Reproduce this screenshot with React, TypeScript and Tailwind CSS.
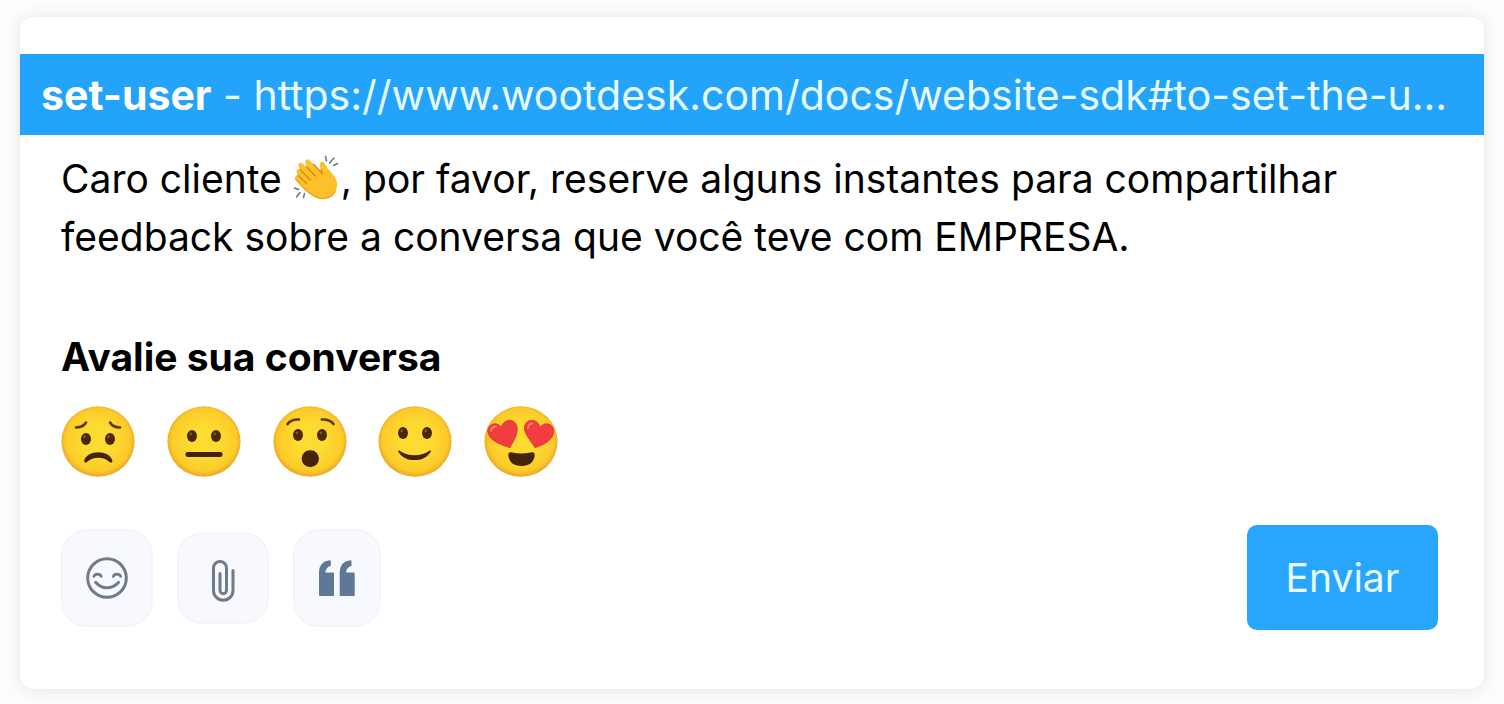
import React, { useState } from "react";

interface Rating {
  value: number;
  label: string;
  face: React.ReactNode;
}

const Eyes: React.FC<{ y: number }> = ({ y }) => (
  <>
    <ellipse cx="25" cy={y} rx="5" ry="6" fill="#4a2807" />
    <ellipse cx="49" cy={y} rx="5" ry="6" fill="#4a2807" />
    <circle cx="23.8" cy={y - 2} r="1.4" fill="#80561b" />
    <circle cx="47.8" cy={y - 2} r="1.4" fill="#80561b" />
  </>
);

const ratings: Rating[] = [
  {
    value: 1,
    label: "Muito ruim",
    face: (
      <>
        <g stroke="#5c370c" strokeWidth="2.6" strokeLinecap="round" fill="none">
          <path d="M15 21.5Q22 21.5 25 16.5" />
          <path d="M49 16.5Q52 21.5 59 21.5" />
        </g>
        <Eyes y={33} />
        <path
          d="M23.3 54.5C26 43.5 48.5 43.5 51.3 54.5C51.6 56.6 50 57.2 48.6 56C43 50.2 31.6 50.2 26 56C24.6 57.2 23 56.6 23.3 54.5Z"
          fill="#43240a"
        />
      </>
    ),
  },
  {
    value: 2,
    label: "Ruim",
    face: (
      <>
        <Eyes y={30} />
        <rect x="18.5" y="46" width="37" height="5" rx="2.2" fill="#43240a" />
      </>
    ),
  },
  {
    value: 3,
    label: "Regular",
    face: (
      <>
        <g stroke="#5c370c" strokeWidth="2.6" strokeLinecap="round" fill="none">
          <path d="M14.5 18Q18.5 13 26 13.5" />
          <path d="M48.8 13.5Q56.5 13 60.5 18" />
        </g>
        <Eyes y={29} />
        <rect x="28.7" y="44.3" width="17.2" height="16.6" rx="8" fill="#43240a" />
      </>
    ),
  },
  {
    value: 4,
    label: "Bom",
    face: (
      <>
        <Eyes y={27} />
        <path
          d="M20.2 45.4C19.9 44.6 21 44.2 22 45C31 50.8 42 50.8 51 45C52 44.2 53.1 44.6 52.8 45.4C47 57 26 57 20.2 45.4Z"
          fill="#43240a"
        />
      </>
    ),
  },
  {
    value: 5,
    label: "Excelente",
    face: (
      <>
        <g fill="#f23c3f" stroke="#d9352f" strokeWidth="0.8">
          <path d="M26 41.7C18 39 3.8 34.5 3.8 25C3.8 17.5 13.5 15 17.5 21.5C19 13 30 11.8 32.7 19.5C35 27 29.5 35 26 41.7Z" />
          <path d="M51 41.7C47.5 35 38.5 27 40.8 19.5C43.5 11.8 54.5 13 56 21.5C60 15 69.7 17.5 69.7 25C69.7 34.5 59 39 51 41.7Z" />
        </g>
        <path d="M7 25Q7.5 20.5 12 20.5" stroke="#fb7f74" strokeWidth="1.8" strokeLinecap="round" fill="none" />
        <path d="M44 22Q44.5 17.5 48.5 17.5" stroke="#fb7f74" strokeWidth="1.8" strokeLinecap="round" fill="none" />
        <path
          d="M24.3 49.5C24 46.5 26 45.8 28.5 46.5Q37.5 48.5 46.5 46.5C49 45.8 51 46.5 50.7 49.5C49.8 56.5 45 60 37.5 60C30 60 25.2 56.5 24.3 49.5Z"
          fill="#43240a"
        />
      </>
    ),
  },
];

const ClapIcon: React.FC = () => (
  <svg
    viewBox="0 0 48 46"
    role="img"
    aria-label="palmas"
    className="inline-block h-[46px] w-[48px] align-[-8px]"
  >
    <path
      d="M2.5 23.5C1.5 21.5 3.5 19.6 5.3 20.6L3.7 17.8C2.5 15.5 5 13.2 7.2 14.8L5.6 11.6C4.3 8.6 7.4 6.5 9.6 8.5L13.5 12L12.3 7.5C11.7 4.6 14.9 3.3 16.7 5.4L28.5 17.5L26.7 10.3C26.2 6.6 30.2 5.4 31.8 8.6C33.5 12.3 35.5 14.6 38.3 17.4C44.3 23.8 45.8 30.5 42.3 36.3C38.3 43 30 45.5 22.5 41.8C18 39.5 13.8 36.3 10.5 32.8C7.5 29.8 4 26.5 2.5 23.5Z"
      fill="#fcc02b"
    />
    <path
      d="M10.5 32.8C7.5 29.8 4 26.5 2.5 23.5M42.3 36.3C38.3 43 30 45.5 22.5 41.8C18 39.5 13.8 36.3 10.5 32.8"
      stroke="#ee9f18"
      strokeWidth="1.3"
      fill="none"
      strokeLinecap="round"
    />
    <g stroke="#d98c12" strokeWidth="1.4" strokeLinecap="round" fill="none">
      <path d="M5.3 20.6L13.5 28.5" />
      <path d="M7.2 14.8L17.5 25" />
      <path d="M13.5 12L22.5 21" />
      <path d="M20.5 9.3L29 18.3L28.2 14.5" />
    </g>
    <g stroke="#5f7a8c" strokeWidth="1.5" strokeLinecap="round">
      <path d="M32.5 1.5L33.5 6" />
      <path d="M41 3L36.5 8" />
      <path d="M44.5 8.5L40.5 10.5" />
      <path d="M1.5 33L5.5 34.5" />
      <path d="M7 37.5L3.5 42" />
      <path d="M11.5 38.5L10.5 42.5" />
    </g>
  </svg>
);

const SmileIcon: React.FC = () => (
  <svg viewBox="0 0 42 42" fill="none" stroke="#6e7b8a" strokeLinecap="round" className="h-[42px] w-[42px]">
    <circle cx="21" cy="21" r="19.3" strokeWidth="3" />
    <path d="M7.8 19.5C9 16.3 14 16.3 15.3 19.5M27.2 19.5C28.5 16.3 33.5 16.3 34.7 19.5" strokeWidth="2.6" />
    <path d="M9.8 25.5C16 32.5 26 32.5 32.4 25.5" strokeWidth="3.2" />
  </svg>
);

const ClipIcon: React.FC = () => (
  <svg viewBox="0 -6 24 50" fill="none" stroke="#6e7b8a" strokeWidth="3" strokeLinecap="round" className="h-[50px] w-[24px]">
    <path d="M22 11.5V31.5A9.75 9.75 0 0 1 2.5 31.5V9A6.5 6.5 0 0 1 15.5 9V31.5A3.25 3.25 0 0 1 9 31.5V14.5" />
  </svg>
);

const QuoteIcon: React.FC = () => (
  <svg viewBox="0 0 36 38" fill="#5f7896" className="h-[38px] w-[36px]">
    <path d="M0 36V13.5Q0 2.5 10.5 1.2Q11.8 1.1 11.8 2.5V6.8Q6.8 8.2 6.3 13.5H14Q15 13.5 15 14.5V36Q15 37 14 37H1Q0 37 0 36Z" />
    <path d="M20.7 36V13.5Q20.7 2.5 31.2 1.2Q32.5 1.1 32.5 2.5V6.8Q27.5 8.2 27 13.5H34.7Q35.7 13.5 35.7 14.5V36Q35.7 37 34.7 37H21.7Q20.7 37 20.7 36Z" />
  </svg>
);

export const SurveyCard: React.FC = () => {
  const [rating, setRating] = useState<number | null>(null);

  return (
    <main className="bg-[#fdfdfd] px-5 pt-[17px] pb-[15px] font-['Inter',sans-serif] text-[39px] leading-[58px] text-black">
      <section className="rounded-[14px] bg-white pt-[37px] pb-[59px] shadow-[0_1px_18px_rgba(0,0,0,0.11)]">
        <header className="truncate bg-[#24a3fb] px-[21px] pt-3 pb-[11px] text-[41px] leading-[58px] text-[#e6fbff]">
          <strong className="font-bold text-white">set-user</strong> -{" "}
          <a href="#to-set-the-user">
            https://www.wootdesk.com/docs/website-sdk#to-set-the-u...
          </a>
        </header>

        <form className="pt-[15px] pr-[46px] pl-[41px]" onSubmit={(e) => e.preventDefault()}>
          <p>
            Caro cliente <ClapIcon />, por favor, reserve alguns instantes para compartilhar
            <br />
            feedback sobre a conversa que você teve com EMPRESA.
          </p>

          <fieldset className="mt-[62px]">
            <legend className="font-bold">Avalie sua conversa</legend>
            <div className="mt-5 flex w-[497px] justify-between">
              {ratings.map((item) => (
                <label
                  key={item.value}
                  className="relative cursor-pointer rounded-full has-checked:ring-4 has-checked:ring-[#24a3fb]"
                >
                  <input
                    type="radio"
                    name="rating"
                    value={item.value}
                    aria-label={item.label}
                    checked={rating === item.value}
                    onChange={() => setRating(item.value)}
                    className="sr-only"
                  />
                  <svg viewBox="0 0 74 71" aria-hidden="true" className="h-[71px] w-[74px]">
                    <defs>
                      <radialGradient id={`face-${item.value}`} cx="0.5" cy="0.48" r="0.52">
                        <stop offset="0.4" stopColor="#fddb30" />
                        <stop offset="0.85" stopColor="#fccb2a" />
                        <stop offset="1" stopColor="#e9a528" />
                      </radialGradient>
                    </defs>
                    <ellipse cx="37" cy="35.5" rx="36.6" ry="35.2" fill={`url(#face-${item.value})`} />
                    {item.face}
                  </svg>
                </label>
              ))}
            </div>
          </fieldset>

          <div className="mt-12 flex items-center gap-6">
            <button
              type="button"
              aria-label="Emoji"
              className="flex h-[98px] w-[92px] items-center justify-center rounded-[26px] border-2 border-[#f3f5f9] bg-[#f8f9fe]"
            >
              <SmileIcon />
            </button>
            <button
              type="button"
              aria-label="Anexar arquivo"
              className="flex h-[92px] w-[92px] items-center justify-center rounded-[26px] border-2 border-[#f3f5f9] bg-[#f8f9fe]"
            >
              <ClipIcon />
            </button>
            <button
              type="button"
              aria-label="Citar"
              className="flex h-[98px] w-[88px] items-center justify-center rounded-[26px] border-2 border-[#f3f5f9] bg-[#f8f9fe]"
            >
              <QuoteIcon />
            </button>
            <button
              type="submit"
              className="ml-auto h-[105px] w-[191px] rounded-[10px] bg-[#28a5fd] text-[#e6fbff]"
            >
              Enviar
            </button>
          </div>
        </form>
      </section>
    </main>
  );
};

export default SurveyCard;
